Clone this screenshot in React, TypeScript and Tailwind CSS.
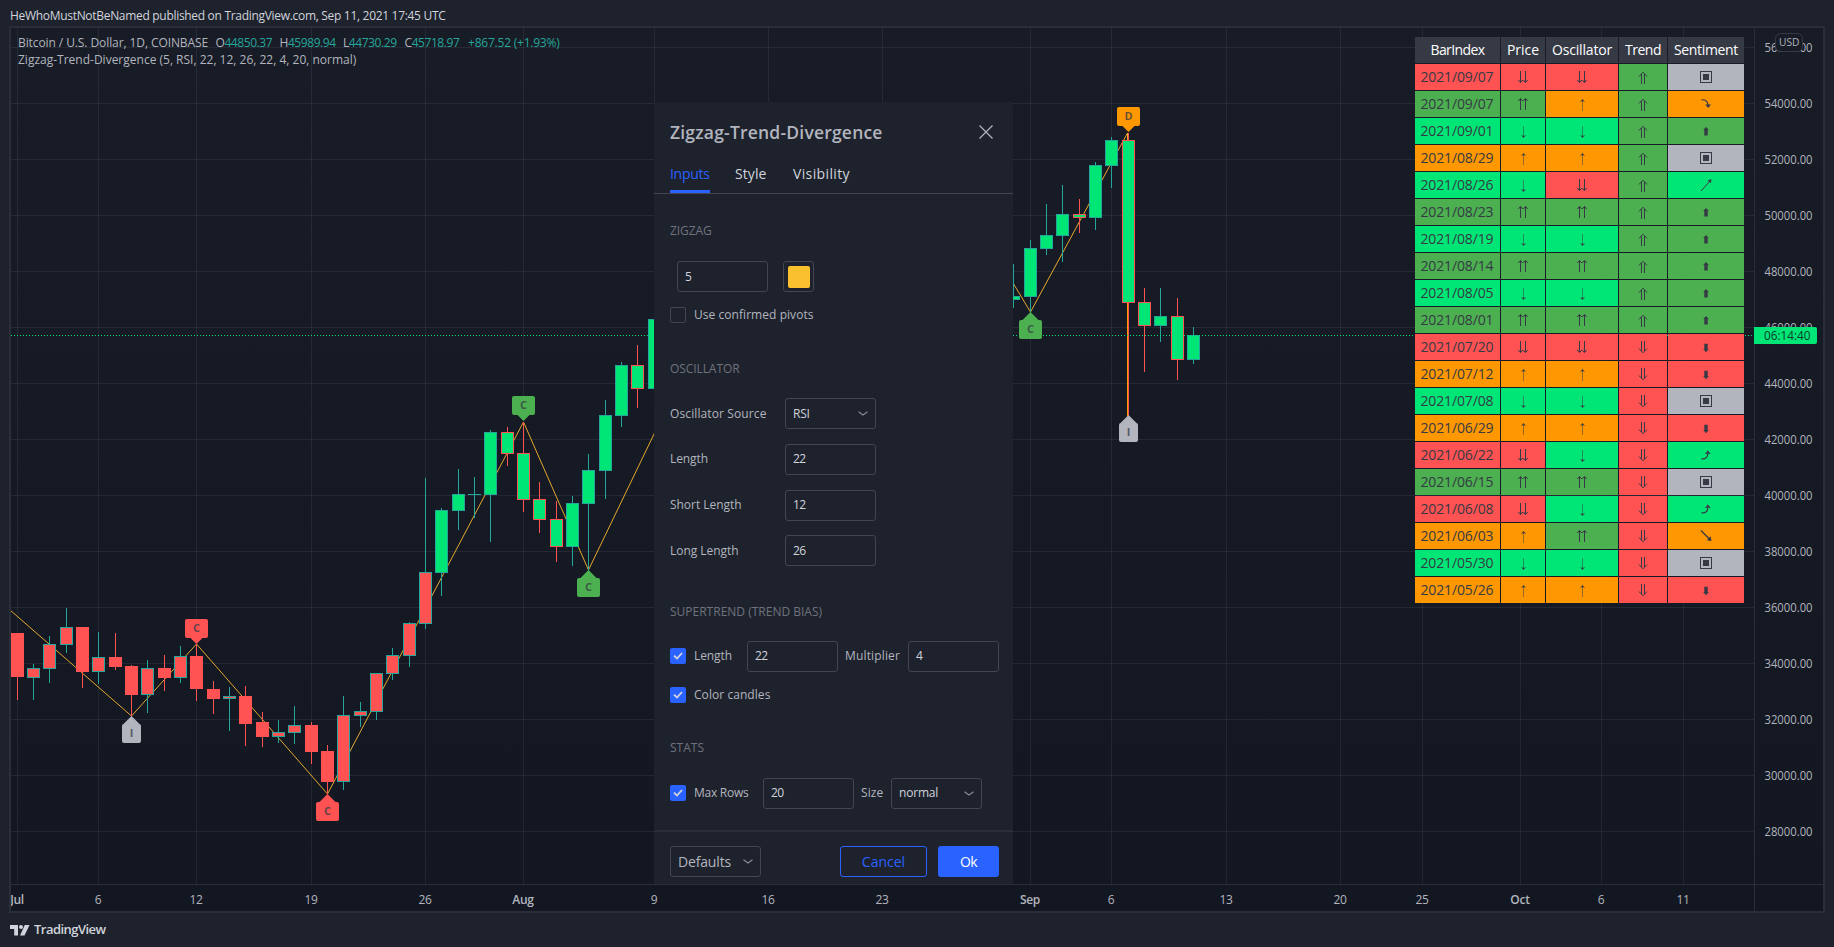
import type { ReactNode } from "react";

type Candle = [top: number, bottom: number, high: number, low: number, up: 0 | 1];

const CANDLES: Record<number, Candle> = {
  0: [633, 677, 633, 700, 0],
  1: [668, 678, 664, 700, 1],
  2: [644, 669, 636, 683, 1],
  3: [627, 645, 608, 653, 1],
  4: [627, 672, 627, 688, 0],
  5: [657, 672, 632, 684, 1],
  6: [657, 667, 633, 670, 0],
  7: [666, 695, 665, 716, 0],
  8: [668, 695, 660, 713, 1],
  9: [668, 678, 655, 691, 0],
  10: [656, 678, 646, 683, 1],
  11: [656, 689, 644, 701, 0],
  12: [689, 699, 681, 714, 0],
  13: [696, 699, 687, 731, 1],
  14: [696, 724, 686, 746, 0],
  15: [722, 737, 712, 747, 0],
  16: [732, 737, 720, 743, 1],
  17: [725, 733, 706, 744, 1],
  18: [725, 752, 722, 764, 0],
  19: [751, 782, 745, 794, 0],
  20: [715, 782, 696, 790, 1],
  21: [711, 716, 702, 727, 1],
  22: [673, 712, 673, 720, 1],
  23: [655, 674, 648, 680, 1],
  24: [623, 656, 622, 667, 1],
  25: [572, 624, 478, 629, 1],
  26: [510, 573, 508, 596, 1],
  27: [494, 511, 469, 530, 1],
  28: [494, 495, 477, 518, 1],
  29: [432, 495, 430, 542, 1],
  30: [432, 454, 427, 466, 0],
  31: [453, 500, 422, 512, 0],
  32: [499, 520, 482, 533, 0],
  33: [519, 547, 501, 562, 0],
  34: [503, 547, 496, 566, 1],
  35: [470, 504, 454, 571, 1],
  36: [415, 471, 400, 499, 1],
  37: [365, 416, 362, 427, 1],
  38: [365, 389, 345, 408, 0],
  39: [319, 389, 313, 417, 1],
  61: [296, 300, 264, 308, 1],
  62: [248, 297, 240, 313, 1],
  63: [235, 249, 204, 255, 1],
  64: [214, 236, 185, 262, 1],
  65: [214, 218, 199, 233, 0],
  66: [165, 218, 162, 230, 1],
  67: [140, 166, 137, 188, 1],
  68: [140, 303, 133, 417, 0],
  69: [302, 326, 288, 372, 0],
  70: [316, 326, 288, 342, 1],
  71: [316, 360, 298, 380, 0],
  72: [335, 360, 327, 364, 1],
};

const barX = (i: number) => Math.floor(17.1 + i * 16.3375);

const DAYS: [label: string, bar: number, major: boolean][] = [
  ["Jul", 0, true],
  ["6", 5, false],
  ["12", 11, false],
  ["19", 18, false],
  ["26", 25, false],
  ["Aug", 31, true],
  ["9", 39, false],
  ["16", 46, false],
  ["23", 53, false],
  ["Sep", 62, true],
  ["6", 67, false],
  ["13", 74, false],
  ["20", 81, false],
  ["25", 86, false],
  ["Oct", 92, true],
  ["6", 97, false],
  ["11", 102, false],
];

const PRICES = Array.from({ length: 15 }, (_, i) => 56000 - i * 2000);

const PINS: [letter: string, x: number, y: number, dir: "up" | "down", color: string][] = [
  ["I", 131.5, 716, "up", "#b2b5be"],
  ["C", 196.5, 644, "down", "#ff5252"],
  ["C", 327.5, 794, "up", "#ff5252"],
  ["C", 523.5, 421, "down", "#4caf50"],
  ["C", 588.5, 570, "up", "#4caf50"],
  ["C", 1030.5, 312, "up", "#4caf50"],
  ["D", 1128.5, 132, "down", "#ff9800"],
  ["I", 1128.5, 415, "up", "#b2b5be"],
];

function Pin({ letter, x, y, dir, color }: { letter: string; x: number; y: number; dir: "up" | "down"; color: string }) {
  const half = letter === "I" ? 9.5 : 11.5;
  const boxY = dir === "down" ? y - 25 : y + 8;
  const s = dir === "down" ? -1 : 1;
  return (
    <g>
      <rect x={x - half} y={boxY} width={half * 2} height={19} rx={2} fill={color} />
      <path d={`M${x} ${y}L${x + 8.5} ${y + 8.5 * s}H${x - 8.5}Z`} fill={color} />
      <text x={x} y={boxY + 12.5} textAnchor="middle" fontSize={11} fontWeight={700} fill="#363a45" fillOpacity={0.75}>
        {letter}
      </text>
    </g>
  );
}

function Chart() {
  return (
    <svg viewBox="11 28 1812 883" width={1812} height={883} className="block" fontFamily="'Open Sans', sans-serif">
      <defs>
        <linearGradient id="bg" x1="0" y1="0" x2="0" y2="1">
          <stop offset="0" stopColor="#181c27" />
          <stop offset="1" stopColor="#131722" />
        </linearGradient>
      </defs>
      <rect x={11} y={28} width={1812} height={883} fill="url(#bg)" />
      <g fill="#f0f3fa" fillOpacity={0.07}>
        {DAYS.map(([, b]) => (
          <rect key={b} x={barX(b)} y={28} width={1} height={856} />
        ))}
        {PRICES.map((p, i) => (
          <rect key={p} x={11} y={47 + i * 56} width={1743} height={1} />
        ))}
      </g>
      <g fill="none" stroke="#f9b72e" strokeOpacity={0.9} strokeWidth={1}>
        <path d="M10 610L131.5 716L196.5 644L327.5 794L523.5 422L588.5 570L655 432" />
        <path d="M1013 283L1030.5 312L1127.5 133V416" />
      </g>
      {Object.entries(CANDLES).map(([k, [t, b, h, l, up]]) => {
        const i = Number(k);
        const x = barX(i);
        const edge = up ? "#26a69a" : "#ff5252";
        return (
          <g key={k}>
            <rect x={x} y={h} width={1} height={l - h} fill={edge} />
            <rect x={x - 6} y={t} width={13} height={b - t} fill={edge} />
            {b - t > 2 && <rect x={x - 5} y={t + 1} width={11} height={b - t - 2} fill={i < 26 ? "#ff5252" : "#00e676"} />}
          </g>
        );
      })}
      <rect x={1127} y={303} width={1} height={113} fill="#ff9800" />
      <path d="M11 335.5H1754" stroke="#00e676" strokeDasharray="1 2" />
      {PINS.map(([letter, x, y, dir, color]) => (
        <Pin key={x + "-" + y} letter={letter} x={x} y={y} dir={dir} color={color} />
      ))}
      <rect x={11} y={884} width={1812} height={1} fill="#2a2e39" />
      <rect x={1754} y={28} width={1} height={883} fill="#2a2e39" />
      <g fontSize={12} fill="#b2b5be">
        {PRICES.map((p, i) => (
          <text key={p} x={1764.5} y={51.7 + i * 56} textLength={48} lengthAdjust="spacingAndGlyphs">
            {p}.00
          </text>
        ))}
        {DAYS.map(([label, b, major]) => (
          <text key={b} x={barX(b)} y={903.5} textAnchor="middle" fontWeight={major ? 600 : 400} letterSpacing={-0.3}>
            {label}
          </text>
        ))}
      </g>
      <rect x={1775.5} y={33.5} width={27} height={18} rx={5} fill="#181c27" stroke="#363a45" />
      <text x={1779} y={46} fontSize={11.5} fill="#b2b5be" textLength={20.5} lengthAdjust="spacingAndGlyphs">
        USD
      </text>
      <path d="M1754 327H1815a2 2 0 0 1 2 2V342a2 2 0 0 1 -2 2H1754Z" fill="#00e676" />
      <text x={1764} y={340} fontSize={12} fill="#0a3d2c" textLength={46.5} lengthAdjust="spacingAndGlyphs">
        06:14:40
      </text>
    </svg>
  );
}

type Tone = "R" | "G" | "L" | "O" | "N";
type Mark = "dd" | "uu" | "d" | "u" | "U" | "D" | "box" | "curveDown" | "curveUp" | "up" | "down" | "ne" | "se";

const TONE: Record<Tone, string> = {
  R: "bg-[#ff5252]",
  G: "bg-[#4caf50]",
  L: "bg-[#00e676]",
  O: "bg-[#ff9800]",
  N: "bg-[#b2b5be]",
};

const TONE_MARK: Record<Tone, Mark> = { R: "dd", G: "uu", L: "d", O: "u", N: "box" };

const ROWS: [date: string, price: Tone, osc: Tone, trend: Tone, sentiment: Tone, mark: Mark][] = [
  ["2021/09/07", "R", "R", "G", "N", "box"],
  ["2021/09/07", "G", "O", "G", "O", "curveDown"],
  ["2021/09/01", "L", "L", "G", "G", "up"],
  ["2021/08/29", "O", "O", "G", "N", "box"],
  ["2021/08/26", "L", "R", "G", "L", "ne"],
  ["2021/08/23", "G", "G", "G", "G", "up"],
  ["2021/08/19", "L", "L", "G", "G", "up"],
  ["2021/08/14", "G", "G", "G", "G", "up"],
  ["2021/08/05", "L", "L", "G", "G", "up"],
  ["2021/08/01", "G", "G", "G", "G", "up"],
  ["2021/07/20", "R", "R", "R", "R", "down"],
  ["2021/07/12", "O", "O", "R", "R", "down"],
  ["2021/07/08", "L", "L", "R", "N", "box"],
  ["2021/06/29", "O", "O", "R", "R", "down"],
  ["2021/06/22", "R", "L", "R", "L", "curveUp"],
  ["2021/06/15", "G", "G", "R", "N", "box"],
  ["2021/06/08", "R", "L", "R", "L", "curveUp"],
  ["2021/06/03", "O", "G", "R", "O", "se"],
  ["2021/05/30", "L", "L", "R", "N", "box"],
  ["2021/05/26", "O", "O", "R", "R", "down"],
];

const MARKS: Record<Mark, ReactNode> = {
  d: (
    <>
      <path d="M8.5 3V14" strokeOpacity={0.5} />
      <path d="M6 12L8.5 15L11 12L8.5 13Z" fill="#363a45" stroke="none" />
    </>
  ),
  u: (
    <>
      <path d="M8.5 4V15" strokeOpacity={0.5} />
      <path d="M6 6L8.5 3L11 6L8.5 5Z" fill="#363a45" stroke="none" />
    </>
  ),
  dd: <path d="M5.5 2V13M10.5 2V13M3.3 11L5.5 13.6L7.7 11M8.3 11L10.5 13.6L12.7 11" />,
  uu: <path d="M5.5 3V14M10.5 3V14M3.3 5L5.5 2.4L7.7 5M8.3 5L10.5 2.4L12.7 5" />,
  U: <path d="M6.5 5V15M9.5 5V15M4 7.4L8 3.2L12 7.4" />,
  D: <path d="M6.5 2V12M9.5 2V12M4 9.6L8 13.8L12 9.6" />,
  box: (
    <>
      <rect x={2.5} y={2.5} width={11} height={11} />
      <rect x={5} y={5} width={6} height={6} fill="#363a45" stroke="none" />
    </>
  ),
  up: <path d="M8 4L10.8 7H9.7V12.6H6.3V7H5.2Z" fill="#363a45" stroke="none" />,
  down: <path d="M8 13.3L10.8 10H9.7V4.8H6.3V10H5.2Z" fill="#363a45" stroke="none" />,
  ne: (
    <>
      <path d="M3 14L12.5 3.5" />
      <path d="M13.5 2.3L12.8 6.3L9.5 3.3Z" fill="#363a45" stroke="none" />
    </>
  ),
  se: (
    <>
      <path d="M3 2.5L12 11.5" strokeWidth={1.3} />
      <path d="M13.5 13L8.8 12.2L12.6 8.3Z" fill="#363a45" stroke="none" />
    </>
  ),
  curveDown: (
    <>
      <path d="M3.5 3.8C7 3.4 9.8 5 10 9" strokeWidth={1.2} />
      <path d="M10.2 12L7.2 8.6H13Z" fill="#363a45" stroke="none" />
    </>
  ),
  curveUp: (
    <>
      <path d="M3.5 11.8C7.5 12.3 9.8 10.5 9.8 6.5" strokeWidth={1.2} />
      <path d="M9.8 3.2L6.8 7.2L9.8 6.4L12.8 7.2Z" fill="#363a45" stroke="none" />
    </>
  ),
};

function Cell({ tone, mark }: { tone: Tone; mark: Mark }) {
  return (
    <div className={`flex items-center justify-center ${TONE[tone]}`}>
      <svg width={16} height={16} viewBox="0 0 16 16" fill="none" stroke="#363a45" strokeWidth={1}>
        {MARKS[mark]}
      </svg>
    </div>
  );
}

function StatsTable() {
  return (
    <div className="absolute left-[1404px] top-[9px] grid auto-rows-[26px] grid-cols-[85px_44px_72px_48px_76px] gap-px text-[14px] leading-[25px] whitespace-nowrap text-[#363a45]">
      <HeadCell className="tracking-[-0.6px]">BarIndex</HeadCell>
      <HeadCell className="tracking-[-0.05px]">Price</HeadCell>
      <HeadCell className="tracking-[-0.18px]">Oscillator</HeadCell>
      <HeadCell className="tracking-[-0.49px]">Trend</HeadCell>
      <HeadCell className="tracking-[-0.34px]">Sentiment</HeadCell>
      {ROWS.map(([date, price, osc, trend, sentiment, mark], i) => (
        <div key={i} className="contents">
          <div className={`pr-px text-center tracking-[-0.13px] ${TONE[price]}`}>{date}</div>
          <Cell tone={price} mark={TONE_MARK[price]} />
          <Cell tone={osc} mark={TONE_MARK[osc]} />
          <Cell tone={trend} mark={trend === "G" ? "U" : "D"} />
          <Cell tone={sentiment} mark={mark} />
        </div>
      ))}
    </div>
  );
}

function HeadCell({ children, className }: { children: ReactNode; className: string }) {
  return <div className={"bg-[#363a45] text-center text-white " + className}>{children}</div>;
}

function Section({ children, className = "" }: { children: ReactNode; className?: string }) {
  return <div className={"h-[16px] shrink-0 text-[12px] leading-[16px] text-[#6f727d] " + className}>{children}</div>;
}

function Field({ children, className = "" }: { children: ReactNode; className?: string }) {
  return (
    <div className={"flex h-[31px] w-[91px] shrink-0 items-center rounded-[3px] border border-[#434651] pl-[7px] " + className}>
      {children}
    </div>
  );
}

function NumberField({ value }: { value: string }) {
  return <Field className="text-[12px] tracking-[-0.5px] text-[#d1d4dc]">{value}</Field>;
}

function Chevron() {
  return (
    <svg width={10} height={5} viewBox="0 0 10 5" fill="none" stroke="#868993" strokeWidth={1.2}>
      <path d="M0.5 0.7L5 4L9.5 0.7" />
    </svg>
  );
}

function Check({ on = false }: { on?: boolean }) {
  return (
    <span className={"mr-2 flex size-4 shrink-0 items-center justify-center rounded-[2px] " + (on ? "bg-[#2962ff]" : "border border-[#434651]")}>
      {on && (
        <svg width={10} height={8} viewBox="0 0 10 8" fill="none" stroke="#d1d4dc" strokeWidth={1.8}>
          <path d="M1 3.7L4 6.5L9 1" />
        </svg>
      )}
    </span>
  );
}

function Dialog() {
  return (
    <div className="absolute left-[643px] top-[74px] flex h-[782px] w-[359px] flex-col bg-[#1e222d] text-[12px] whitespace-nowrap text-[#b2b5be]">
      <div className="flex h-[92px] shrink-0 flex-col border-b border-[#434651] pl-4 pr-[14px]">
        <div className="flex h-[61px] items-center justify-between pr-[6px] text-[17.5px] font-semibold tracking-[0.2px]">
          <span>Zigzag-Trend-Divergence</span>
          <svg width={14} height={14} viewBox="0 0 14 14" stroke="#b2b5be" strokeWidth={1.2}>
            <path d="M0.5 0.5L13.5 13.5M13.5 0.5L0.5 13.5" />
          </svg>
        </div>
        <div className="flex h-[31px] text-[14px] leading-[24px] text-[#d1d4dc]">
          <span className="h-[31px] w-[40px] border-b-[3px] border-[#2962ff] tracking-[-0.3px] text-[#2962ff]">Inputs</span>
          <span className="ml-[25px] w-[32px] tracking-[0.08px]">Style</span>
          <span className="ml-[26px] tracking-[0.37px]">Visibility</span>
        </div>
      </div>
      <div className="flex h-[638px] shrink-0 flex-col border-b-2 border-[#2a2e39] pl-4 pt-[29px]">
        <Section className="tracking-[-0.1px]">ZIGZAG</Section>
        <div className="mt-[22px] flex pl-[7px]">
          <NumberField value="5" />
          <span className="ml-[15px] flex size-[31px] items-center justify-center rounded-[3px] border border-[#434651]">
            <span className="size-[22px] rounded-[2px] bg-[#fbc02d]" />
          </span>
        </div>
        <div className="mt-[15px] flex h-4 items-center tracking-[0.05px]">
          <Check />
          Use confirmed pivots
        </div>
        <Section className="mt-[38px] tracking-[-0.08px]">OSCILLATOR</Section>
        <div className="mt-[21.4px] grid auto-rows-[31px] grid-cols-[115px_91px] items-center gap-y-[14.6px]">
          <span className="tracking-[0.11px]">Oscillator Source</span>
          <Field className="justify-between pr-[7px] tracking-[-0.28px] text-[#d1d4dc]">
            RSI
            <Chevron />
          </Field>
          <span className="tracking-[-0.09px]">Length</span>
          <NumberField value="22" />
          <span className="tracking-[-0.04px]">Short Length</span>
          <NumberField value="12" />
          <span className="tracking-[-0.04px]">Long Length</span>
          <NumberField value="26" />
        </div>
        <Section className="mt-[37.8px]">SUPERTREND (TREND BIAS)</Section>
        <div className="mt-[21px] flex h-[31px] items-center">
          <Check on />
          <span className="w-[53px] tracking-[-0.09px]">Length</span>
          <NumberField value="22" />
          <span className="w-[70px] pl-[7px] tracking-[0.15px]">Multiplier</span>
          <NumberField value="4" />
        </div>
        <div className="mt-[15px] flex h-4 items-center tracking-[0.06px]">
          <Check on />
          Color candles
        </div>
        <Section className="mt-[37px]">STATS</Section>
        <div className="mt-[22px] flex h-[31px] items-center">
          <Check on />
          <span className="w-[69px] tracking-[-0.25px]">Max Rows</span>
          <NumberField value="20" />
          <span className="w-[37px] pl-[7px] tracking-[0.12px]">Size</span>
          <Field className="justify-between pr-[7px] tracking-[-0.2px] text-[#d1d4dc]">
            normal
            <Chevron />
          </Field>
        </div>
      </div>
      <div className="flex flex-1 items-start pl-4 pr-[14px] pt-[14px] text-[14px]">
        <Field className="justify-between pr-[7px] tracking-[-0.16px]">
          Defaults
          <Chevron />
        </Field>
        <span className="ml-auto flex h-[31px] w-[87px] items-center justify-center rounded-[3px] border border-[#2962ff] text-[#2962ff]">
          Cancel
        </span>
        <span className="ml-[11px] flex h-[31px] w-[61px] items-center justify-center rounded-[3px] bg-[#2962ff] font-medium tracking-[-0.5px] text-white">
          Ok
        </span>
      </div>
    </div>
  );
}

function Quote({ name, value, className }: { name: string; value: string; className: string }) {
  return (
    <span className={"tracking-[-0.43px] " + className}>
      {name}
      <span className="text-[#26a69a]">{value}</span>
    </span>
  );
}

function Legend() {
  return (
    <div className="absolute left-[7px] top-[6px] text-[12px] leading-[17px] whitespace-nowrap text-[#b2b5be]">
      <div className="flex">
        <span className="w-[197.5px] tracking-[-0.09px]">Bitcoin / U.S. Dollar, 1D, COINBASE</span>
        <Quote className="w-[64px]" name="O" value="44850.37" />
        <Quote className="w-[63.5px]" name="H" value="45989.94" />
        <Quote className="w-[61.5px]" name="L" value="44730.29" />
        <Quote className="w-[63.5px]" name="C" value="45718.97" />
        <span className="tracking-[-0.22px] text-[#26a69a]">+867.52 (+1.93%)</span>
      </div>
      <div>Zigzag-Trend-Divergence (5, RSI, 22, 12, 26, 22, 4, 20, normal)</div>
    </div>
  );
}

export default function App() {
  return (
    <div className="flex h-[947px] w-[1834px] flex-col overflow-hidden bg-[#1e222d] font-['Open_Sans',sans-serif] text-[#d1d4dc]">
      <div className="h-[26px] shrink-0 pl-[10px] text-[12px] leading-[31px] font-medium tracking-[-0.306px]">
        HeWhoMustNotBeNamed published on TradingView.com, Sep 11, 2021 17:45 UTC
      </div>
      <div className="relative ml-[9px] h-[887px] w-[1816px] shrink-0 border-2 border-[#2a2e39]">
        <Chart />
        <Legend />
        <StatsTable />
        <Dialog />
      </div>
      <div className="flex h-[34px] items-center gap-1 pl-[10px] text-[13px] font-semibold tracking-[-0.54px]">
        <svg width={20} height={11} viewBox="0 0 20 11" fill="#d1d4dc">
          <path d="M0 0H8V10.5H4.2V4H0Z" />
          <circle cx={11} cy={2} r={2} />
          <path d="M14.8 0H19.5L14.5 10.5H10Z" />
        </svg>
        TradingView
      </div>
    </div>
  );
}
